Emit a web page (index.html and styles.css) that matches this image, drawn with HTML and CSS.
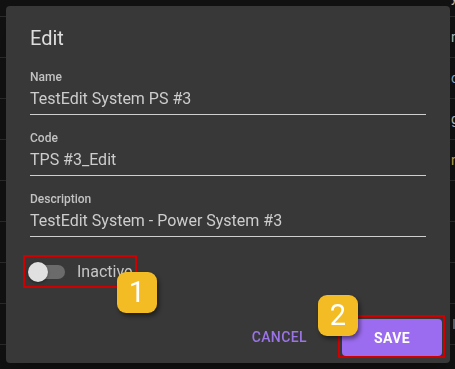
FILE: index.html
```html
<!DOCTYPE html>
<html>
<head>
<meta charset="utf-8">
<link rel="stylesheet" href="styles.css">
</head>
<body>
<div class="bg">
  <div class="row first"><span class="frag y">y</span></div>
  <div class="row"><span class="frag">n</span></div>
  <div class="row"><span class="frag blue">ca</span></div>
  <div class="row"><span class="frag">g</span></div>
  <div class="row"><span class="frag orange">n</span></div>
  <div class="row"></div>
  <div class="row"></div>
  <div class="row"></div>
  <div class="row"><span class="chip"></span></div>
  <div class="row"></div>
</div>

<div class="dialog">
  <h2 class="title">Edit</h2>
  <div class="content">
    <div class="field">
      <label class="label">Name</label>
      <div class="input">TestEdit System PS #3</div>
    </div>
    <div class="field">
      <label class="label">Code</label>
      <div class="input">TPS #3_Edit</div>
    </div>
    <div class="field">
      <label class="label">Description</label>
      <div class="input">TestEdit System - Power System #3</div>
    </div>
    <div class="toggle">
      <span class="switch"><span class="track"></span><span class="thumb"></span></span>
      <span class="toggle-text">Inactive</span>
    </div>
  </div>
  <div class="actions">
    <button class="cancel">CANCEL</button>
    <div class="hl"><button class="save">SAVE</button></div>
  </div>
  <div class="badge b1">1</div>
  <div class="badge b2">2</div>
</div>
</body>
</html>
```

FILE: styles.css
```css
* { box-sizing: border-box; }
html, body {
  margin: 0;
  padding: 0;
  width: 455px;
  height: 369px;
  overflow: hidden;
  background: #121212;
  font-family: Roboto, "Liberation Sans", sans-serif;
}
.bg {
  display: flex;
  flex-direction: column;
}
.row {
  height: 41px;
  border-bottom: 1px solid #2c2c2c;
  display: flex;
  align-items: center;
  padding-left: 451px;
  white-space: nowrap;
  overflow: hidden;
  font-size: 14px;
  color: #bdbdbd;
}
.row.first {
  height: 17px;
  align-items: flex-start;
}
.frag.y { margin-top: -11px; }
.frag.blue { color: #8fb1d6; }
.frag.orange { color: #d8a050; }
.chip {
  display: inline-block;
  width: 6px;
  height: 10px;
  margin-left: 2px;
  background: #5b6773;
}
.dialog {
  position: fixed;
  left: 6px;
  top: 6px;
  width: 444px;
  height: 357px;
  background: #383838;
  border-radius: 4px;
  box-shadow: 0 11px 15px -7px rgba(0,0,0,0.2), 0 24px 38px 3px rgba(0,0,0,0.14);
  display: flex;
  flex-direction: column;
}
.title {
  margin: 0;
  padding: 16px 24px 0;
  font-size: 20px;
  line-height: 32px;
  font-weight: 400;
  color: #dedede;
}
.content {
  padding: 0 24px;
  display: flex;
  flex-direction: column;
}
.field {
  padding-top: 16px;
  padding-bottom: 4px;
  border-bottom: 1px solid #cfcfcf;
  display: flex;
  flex-direction: column;
}
.label {
  font-size: 12px;
  line-height: 14px;
  color: #c2c2c2;
  font-weight: 500;
}
.input {
  margin-top: 3px;
  font-size: 16px;
  line-height: 23px;
  color: #cdcdcd;
}
.toggle {
  margin-top: 18px;
  margin-left: -7px;
  width: 114px;
  height: 33px;
  border: 2px solid #d00000;
  display: flex;
  align-items: center;
}
.switch {
  position: relative;
  width: 40px;
  height: 20px;
  margin-left: 3px;
  flex: none;
}
.track {
  position: absolute;
  left: 3px;
  top: 3px;
  width: 34px;
  height: 14px;
  border-radius: 7px;
  background: #6b6b6b;
}
.thumb {
  position: absolute;
  left: 0;
  top: 0;
  width: 20px;
  height: 20px;
  border-radius: 50%;
  background: #e0e0e0;
  box-shadow: 0 1px 3px rgba(0,0,0,0.4);
}
.toggle-text {
  margin-left: 9px;
  font-size: 16px;
  color: #c6c6c6;
}
.actions {
  margin-top: auto;
  padding: 0 5px 5px 0;
  display: flex;
  justify-content: flex-end;
  align-items: center;
}
.cancel {
  background: none;
  border: 0;
  padding: 6px 8px;
  margin-right: 23px;
  font-family: Roboto, "Liberation Sans", sans-serif;
  font-size: 14px;
  font-weight: 500;
  letter-spacing: 0.4px;
  color: #9b74e6;
}
.hl {
  border: 2px solid #d00000;
  padding: 2px 1px 0 2px;
}
.save {
  display: block;
  width: 100px;
  height: 37px;
  border: 0;
  border-radius: 4px;
  background: #9c6cf0;
  color: #ffffff;
  font-family: Roboto, "Liberation Sans", sans-serif;
  font-size: 14px;
  font-weight: 700;
  letter-spacing: 0.4px;
}
.badge {
  position: absolute;
  width: 40px;
  height: 41px;
  border-radius: 9px;
  background: #f4bc24;
  color: #ffffff;
  font-size: 29px;
  line-height: 41px;
  text-align: center;
  box-shadow: 2px 3px 4px rgba(0,0,0,0.45);
}
.b1 { left: 111px; top: 266px; }
.b2 { left: 312px; top: 289px; }
```
